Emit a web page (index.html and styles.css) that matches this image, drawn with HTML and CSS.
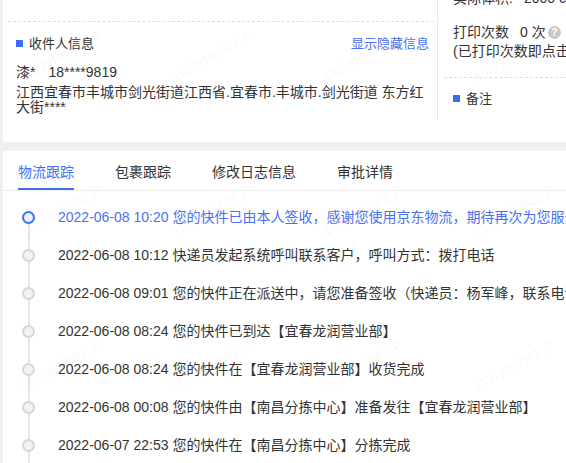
FILE: index.html
```html
<!DOCTYPE html>
<html lang="zh-CN">
<head>
    <meta charset="UTF-8">
    <meta name="viewport" content="width=device-width, initial-scale=1.0">
    <title>运单详情</title>
    <link rel="stylesheet" href="styles.css">
</head>
<body>
  <div class="page">

    <div class="card info-card">
      <div class="info-left">
        <div class="prev-section"></div>
        <div class="section">
          <div class="section-head">
            <span class="section-title">收件人信息</span>
            <a class="link" href="#">显示隐藏信息</a>
          </div>
          <div class="receiver">漆*<span class="phone">18****9819</span></div>
          <div class="address">江西宜春市丰城市剑光街道江西省.宜春市.丰城市.剑光街道 东方红大街****</div>
        </div>
      </div>

      <div class="info-right">
        <div class="field field-cut"><span class="label">实际体积:</span>2000 cm³</div>
        <div class="field">
          <span class="label">打印次数</span>0 次<span class="help">?</span>
        </div>
        <div class="note">(已打印次数即点击打印的次数)</div>
        <div class="divider"></div>
        <div class="section-title">备注</div>
      </div>
    </div>

    <div class="card track-card">
      <div class="tabs">
        <div class="tab active">物流跟踪</div>
        <div class="tab">包裹跟踪</div>
        <div class="tab">修改日志信息</div>
        <div class="tab">审批详情</div>
      </div>

      <ul class="timeline">
        <li class="step current"><span class="axis"><i class="dot"></i></span><span class="step-text">2022-06-08 10:20 您的快件已由本人签收，感谢您使用京东物流，期待再次为您服务</span></li>
        <li class="step"><span class="axis"><i class="dot"></i></span><span class="step-text">2022-06-08 10:12 快递员发起系统呼叫联系客户，呼叫方式：拨打电话</span></li>
        <li class="step"><span class="axis"><i class="dot"></i></span><span class="step-text">2022-06-08 09:01 您的快件正在派送中，请您准备签收（快递员：杨军峰，联系电话：18****2236）</span></li>
        <li class="step"><span class="axis"><i class="dot"></i></span><span class="step-text">2022-06-08 08:24 您的快件已到达【宜春龙润营业部】</span></li>
        <li class="step"><span class="axis"><i class="dot"></i></span><span class="step-text">2022-06-08 08:24 您的快件在【宜春龙润营业部】收货完成</span></li>
        <li class="step"><span class="axis"><i class="dot"></i></span><span class="step-text">2022-06-08 00:08 您的快件由【南昌分拣中心】准备发往【宜春龙润营业部】</span></li>
        <li class="step"><span class="axis"><i class="dot"></i></span><span class="step-text">2022-06-07 22:53 您的快件在【南昌分拣中心】分拣完成</span></li>
        <li class="step"><span class="axis"><i class="dot"></i></span><span class="step-text">2022-06-07 22:40 您的快件已到达【南昌分拣中心】</span></li>
      </ul>
    </div>

    <!-- watermark over the whole page -->
    <div class="watermark">
      <span>15279190501_P</span><span>15279190501_P</span><span>15279190501_P</span><span>15279190501_P</span>
      <span>15279190501_P</span><span>15279190501_P</span><span>15279190501_P</span><span>15279190501_P</span>
      <span>15279190501_P</span><span>15279190501_P</span><span>15279190501_P</span><span>15279190501_P</span>
      <span>15279190501_P</span><span>15279190501_P</span><span>15279190501_P</span><span>15279190501_P</span>
    </div>
  </div>
</body>
</html>
```

FILE: styles.css
```css
body{
    margin: 0;
    height: 463px;
    overflow: hidden;
    background-color: #f0f0f0;
    font-family: "Liberation Sans", Arial, "Noto Sans CJK SC", sans-serif;
    font-size: 14px;
    color: #333;
}

.page{
    position: relative;
    padding-left: 3px;
    height: 463px;
    overflow: hidden;
}

.card{
    background: #fff;
}

/* top card: receiver info + print info */
.info-card{
    height: 142px;
    overflow: hidden;
    display: grid;
    grid-template-columns: 434px 1fr;
    align-items: start;
}

.info-left{
    padding: 0 3px 0 5px;
}

.prev-section{
    height: 21px;
    border-bottom: 1px dashed #ddd;
}

.section{
    padding: 0 5px 0 8px;
}

.section-head{
    margin-top: 12px;
    display: flex;
    justify-content: space-between;
    line-height: 20px;
}

.section-title{
    font-size: 13px;
    line-height: 20px;
    white-space: nowrap;
}

.section-title::before{
    content: "";
    display: inline-block;
    width: 7px;
    height: 7px;
    background-color: #3d6ff5;
    margin-right: 6px;
    vertical-align: 1px;
}

.link{
    font-size: 13px;
    color: #4b70f2;
    text-decoration: none;
}

.receiver{
    margin-top: 8px;
    line-height: 20px;
}

.phone{
    margin-left: 13px;
}

.address{
    margin-top: 3px;
    line-height: 15px;
}

.info-right{
    border-left: 1px solid #e8e8e8;
    padding: 0 0 11px 15px;
    white-space: nowrap;
}

.field{
    line-height: 20px;
    display: flex;
    align-items: center;
}

.field-cut{
    margin-top: -12px;
    margin-bottom: 14px;
}

.label{
    margin-right: 11px;
}

.help{
    display: inline-block;
    width: 13px;
    height: 13px;
    border-radius: 50%;
    background-color: #c8c8c8;
    color: #fff;
    font-size: 10px;
    font-weight: bold;
    line-height: 13px;
    text-align: center;
    margin-left: 2px;
}

.note{
    line-height: 19px;
}

.divider{
    margin: 16px 0 0 -9px;
    border-top: 1px dashed #ddd;
}

.info-right .section-title{
    display: block;
    margin-top: 11px;
}

/* bottom card: tabs + timeline */
.track-card{
    margin-top: 9px;
    height: 400px;
}

.tabs{
    display: flex;
    gap: 41px;
    padding-left: 15px;
    border-bottom: 1px solid #eee;
}

.tab{
    line-height: 20px;
    padding: 11px 0 6px;
    border-bottom: 2px solid transparent;
    white-space: nowrap;
}

.tab.active{
    color: #3d6ff5;
    border-bottom-color: #3d6ff5;
}

.timeline{
    list-style: none;
    margin: 0;
    padding: 7px 0 0;
}

.step{
    display: flex;
    align-items: center;
    height: 38px;
}

.axis{
    align-self: stretch;
    width: 13px;
    margin-left: 19px;
    display: flex;
    align-items: center;
    background: linear-gradient(#e6e6e6, #e6e6e6) center / 2px 100% no-repeat;
}

.step.current .axis{
    background-position: center bottom;
    background-size: 2px 50%;
}

.dot{
    display: block;
    width: 13px;
    height: 13px;
    box-sizing: border-box;
    border-radius: 50%;
    border: 2px solid #d6d6d6;
    background-color: #f2f2f2;
}

.step.current .dot{
    border-color: #3d6ff5;
    background-color: #e8eefd;
}

.step-text{
    margin-left: 23px;
    line-height: 20px;
    white-space: nowrap;
}

.step.current .step-text{
    color: #4b70f2;
}

.watermark{
    position: absolute;
    left: -15px;
    top: -22px;
    display: grid;
    grid-template-columns: repeat(4, 151px);
    grid-auto-rows: 155px;
    pointer-events: none;
}

.watermark span{
    display: flex;
    align-items: center;
    justify-content: center;
    font-size: 12px;
    color: rgba(0,0,0,0.05);
    transform: rotate(-30deg);
}
```
